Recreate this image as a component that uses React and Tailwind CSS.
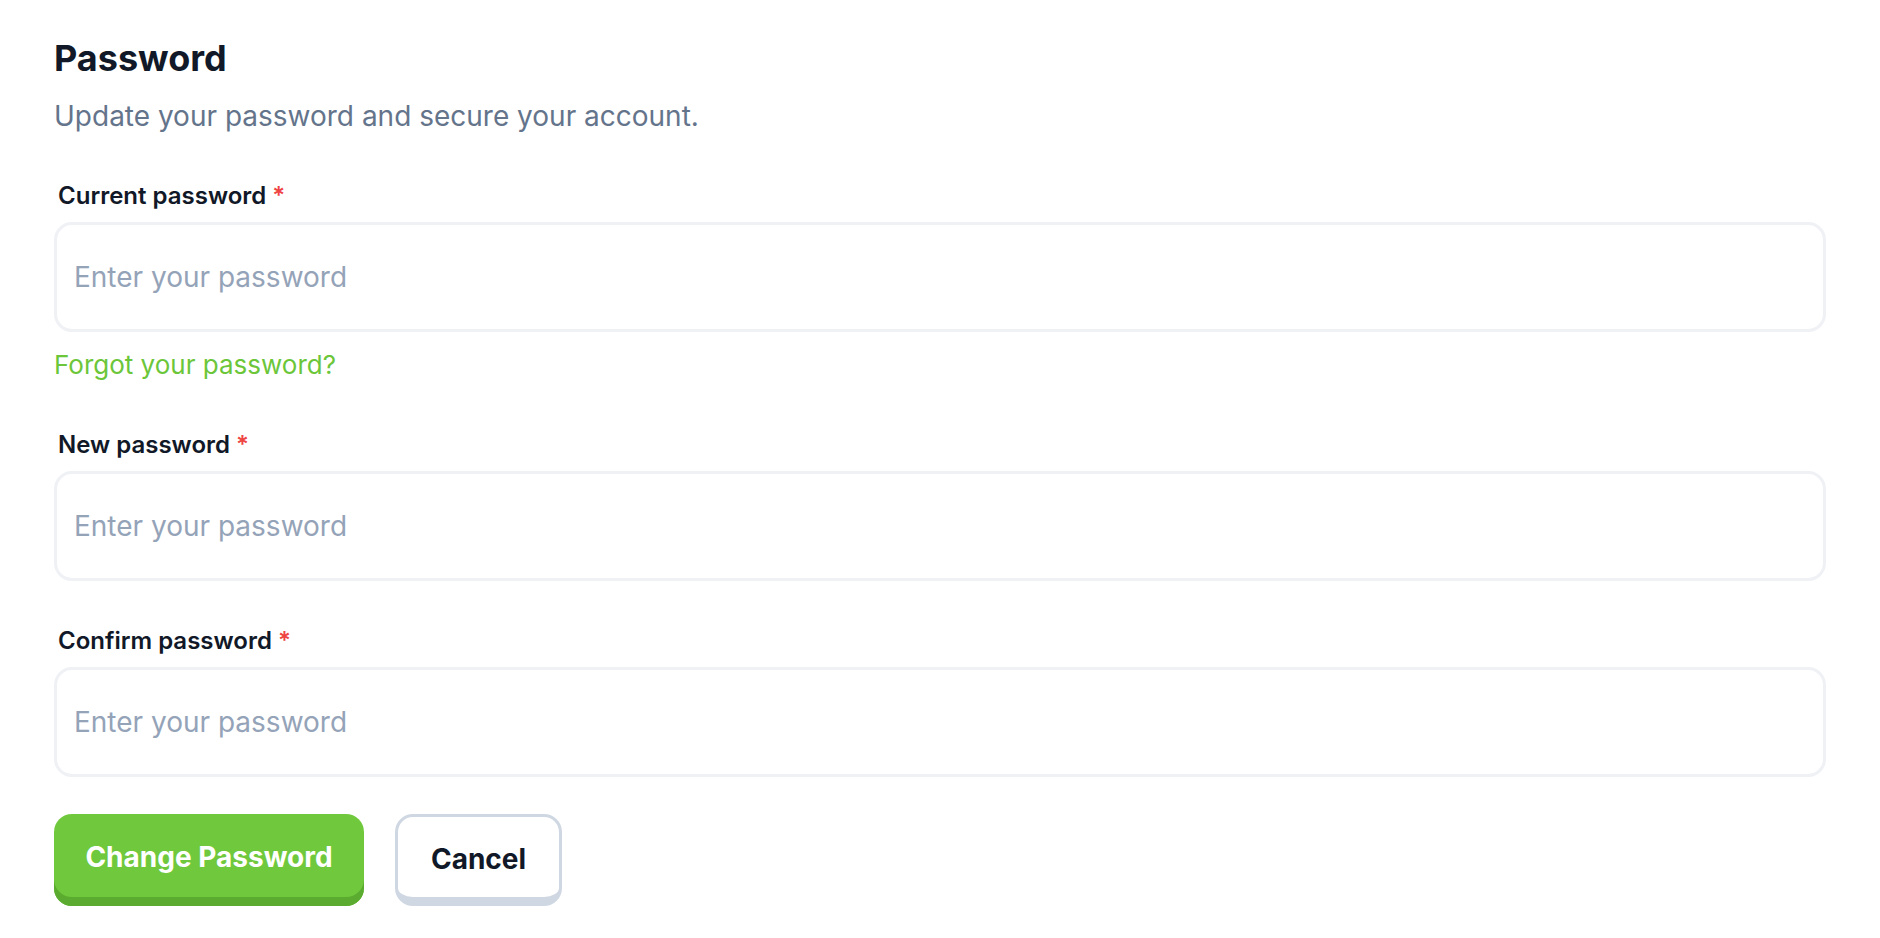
export default function App() {
  const font = { fontFamily: 'Inter, "Noto Sans", sans-serif' };
  const Field = ({ label }) => (
    <div className="flex flex-col gap-[10px]">
      <label className="pl-[4px] text-[24px] leading-[32px] font-semibold text-[#111827]">
        {label} <span className="text-[#ef4444]">*</span>
      </label>
      <input
        type="password"
        placeholder="Enter your password"
        className="h-[110px] w-full rounded-[18px] border-[3px] border-[#eff1f5] bg-white px-[17px] text-[28px] text-[#111827] outline-none placeholder:text-[#94a3b8]"
      />
    </div>
  );
  return (
    <div className="min-h-screen bg-white px-[54px] pt-[38px]" style={font}>
      <h1 className="text-[36px] leading-[40px] font-bold text-[#111827]">Password</h1>
      <p className="mt-[18px] text-[28px] leading-[40px] text-[#64748b]">
        Update your password and secure your account.
      </p>
      <div className="mt-[44px] flex flex-col">
        <Field label="Current password" />
        <a href="#" className="mt-[13px] self-start text-[26px] leading-[40px] text-[#6cc63a]">
          Forgot your password?
        </a>
        <div className="mt-[44px]">
          <Field label="New password" />
        </div>
        <div className="mt-[44px]">
          <Field label="Confirm password" />
        </div>
        <div className="mt-[37px] flex items-start gap-[31px]">
          <button className="h-[92px] w-[310px] rounded-[18px] bg-[#70c93c] pb-[6px] text-[28px] font-bold text-white shadow-[inset_0_-9px_0_#5aab2f]">
            Change Password
          </button>
          <button className="h-[92px] w-[167px] rounded-[18px] border-[3px] border-b-[9px] border-[#cfd7e3] bg-white pt-[3px] text-[28px] font-bold text-[#111827]">
            Cancel
          </button>
        </div>
      </div>
    </div>
  );
}
